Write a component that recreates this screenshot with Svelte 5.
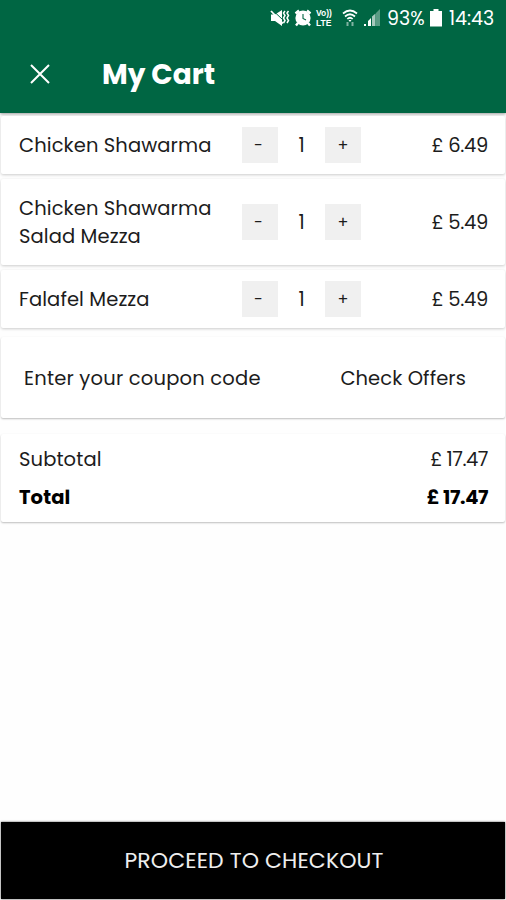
<script lang="ts">
	type Item = { name: string; qty: number; price: number };

	let items: Item[] = $state([
		{ name: 'Chicken Shawarma', qty: 1, price: 6.49 },
		{ name: 'Chicken Shawarma Salad Mezza', qty: 1, price: 5.49 },
		{ name: 'Falafel Mezza', qty: 1, price: 5.49 }
	]);

	let total = $derived(items.reduce((sum, item) => sum + item.qty * item.price, 0));

	const money = (value: number) => `£ ${value.toFixed(2)}`;

	const change = (item: Item, step: number) => () => {
		item.qty = Math.max(0, item.qty + step);
	};
</script>

<div class="screen">
	<header>
		<div class="status">
			<svg class="mute" width="20" height="18" viewBox="0 0 20 18">
				<path d="M1 5.500h4l7-4.500v16l-7-5H1z" fill="#fff" />
				<path d="M3.500 2l9 8.500" stroke="#006643" stroke-width="1" />
				<path d="M1 2l12 12.500" stroke="#fff" stroke-width="1.800" />
				<path d="M15 2l-1.500 2 1.500 2.500-1.500 2.500 1.500 2.500-1.500 2.500M18.500 2l-1.500 2 1.500 2.500-1.500 2.500 1.500 2.500-1.500 2.500" fill="none" stroke="#fff" stroke-width="1.500" />
			</svg>
			<svg class="alarm" width="18" height="18" viewBox="0 0 18 18">
				<path d="M1.500 4.500l3.500-3M16.500 4.500l-3.500-3M4 14l-2 2.500M14 14l2 2.500" stroke="#fff" stroke-width="2.400" />
				<circle cx="9" cy="9" r="7.600" fill="#fff" />
				<path d="M9 5v4.500l3 1.500" fill="none" stroke="#006643" stroke-width="1.100" />
			</svg>
			<span class="volte"><span>Vo))</span><span>LTE</span></span>
			<svg class="wifi" width="16" height="18" viewBox="0 0 16 18">
				<g fill="none" stroke="#fff" stroke-width="1.700">
					<path d="M1 4.500q7-6 14 0M3 7.500q5-4.500 10 0M5.300 10q2.700-2.500 5.400 0" />
				</g>
				<path d="M6.500 11h3L8 13z" fill="#fff" />
				<path d="M5.500 13v4M10.500 13v4" stroke="#fff" stroke-width="2" opacity=".5" />
			</svg>
			<svg class="signal" width="18" height="18" viewBox="0 0 18 18">
				<path d="M1 15h2v2H1zM5 12l3-3v8H5z" fill="#fff" />
				<path d="M9 7.500l3.500-3V17H9z" fill="#fff" opacity=".65" />
				<path d="M13 4l4-4v17h-4z" fill="#fff" opacity=".35" />
			</svg>
			<span class="percent">93%</span>
			<svg class="battery" width="12" height="18" viewBox="0 0 12 18">
				<path d="M3.500 0h5v2H12v15.500H0V2h3.500z" fill="#fff" />
			</svg>
			<span class="clock">14:43</span>
		</div>
		<div class="bar">
			<button class="close" aria-label="Close">
				<svg width="20" height="20" viewBox="0 0 20 20">
					<path d="M1 1l18 18M19 1L1 19" stroke="#fff" stroke-width="2" />
				</svg>
			</button>
			<h1>My Cart</h1>
		</div>
	</header>

	<main>
		<ul class="items">
			{#each items as item}
				<li class="card item">
					<span class="name">{item.name}</span>
					<div class="qty">
						<button class="minus" onclick={change(item, -1)}>-</button>
						<span>{item.qty}</span>
						<button onclick={change(item, 1)}>+</button>
					</div>
					<span class="price">{money(item.price)}</span>
				</li>
			{/each}
		</ul>

		<section class="card coupon">
			<span class="code">Enter your coupon code</span>
			<span class="offers">Check Offers</span>
		</section>

		<section class="card totals">
			<div class="line">
				<span class="label">Subtotal</span>
				<span class="sum">{money(total)}</span>
			</div>
			<div class="line grand">
				<span class="label">Total</span>
				<span class="sum">{money(total)}</span>
			</div>
		</section>
	</main>

	<button class="checkout">PROCEED TO CHECKOUT</button>
</div>

<style>
	:global(body) {
		background: #fff;
	}
	.screen {
		display: flex;
		flex-direction: column;
		box-sizing: border-box;
		height: 900px;
		padding-bottom: 1px;
		overflow: hidden;
		background: #fefefe;
		color: #1c1c1c;
		font-family: Poppins, Inter, sans-serif;
		font-size: 19.5px;
		line-height: 28px;
	}
	button {
		border: 0;
		padding: 0;
		font: inherit;
		color: inherit;
		cursor: pointer;
	}
	header {
		flex: none;
		height: 113px;
		background: #006643;
		color: #fff;
		box-shadow: 0 1px 3px rgba(0, 0, 0, 0.4);
	}
	.status {
		display: flex;
		justify-content: flex-end;
		align-items: center;
		height: 36px;
		padding-right: 11px;
		line-height: 20px;
		white-space: nowrap;
	}
	.status svg {
		flex: none;
	}
	.alarm {
		margin-left: 4px;
	}
	.volte {
		display: flex;
		flex-direction: column;
		width: 17px;
		margin-left: 4px;
		font: bold 8.5px/10px 'Liberation Sans', sans-serif;
	}
	.wifi {
		margin-left: 9px;
	}
	.signal {
		margin-left: 5px;
	}
	.percent {
		width: 38px;
		margin: 1px 0 0 6px;
		font-size: 19px;
	}
	.battery {
		margin-left: 5px;
	}
	.clock {
		width: 46px;
		margin: 1px 0 0 7px;
		font-size: 19px;
	}
	.bar {
		display: flex;
		align-items: center;
		height: 76px;
	}
	.close {
		display: flex;
		margin-left: 30px;
		background: none;
	}
	h1 {
		margin: 2px 0 0 52px;
		font-size: 28px;
		font-weight: 700;
		line-height: 36px;
	}
	main {
		flex: 1;
		padding: 3px 1px 0;
	}
	.card {
		box-sizing: border-box;
		background: #fff;
		border-radius: 2px;
		box-shadow: 0 1px 2px rgba(0, 0, 0, 0.26);
	}
	.items {
		display: flex;
		flex-direction: column;
		gap: 5px;
		margin: 0;
		padding: 0;
		list-style: none;
	}
	.item {
		display: flex;
		align-items: center;
		min-height: 58px;
		padding: 0 17px 0 18px;
		box-shadow: 0 1px 3px rgba(0, 0, 0, 0.2);
	}
	.item:nth-child(2) {
		min-height: 86px;
	}
	.name {
		width: 223px;
		padding-top: 2px;
		letter-spacing: 0.1px;
	}
	.qty {
		display: flex;
		align-items: center;
		width: 119px;
	}
	.qty button {
		width: 36px;
		height: 36px;
		padding-top: 1px;
		background: #f0f0f0;
		font-size: 16px;
	}
	.qty .minus {
		padding-right: 3px;
	}
	.qty span {
		flex: 1;
		padding-top: 1px;
		text-align: center;
	}
	.price {
		margin-left: auto;
		padding-top: 2px;
		letter-spacing: -0.3px;
	}
	.coupon {
		display: flex;
		justify-content: space-between;
		align-items: center;
		height: 81px;
		margin-top: 9px;
		padding: 2px 39px 0 23px;
	}
	.code {
		letter-spacing: 0.2px;
	}
	.offers {
		letter-spacing: 0.1px;
	}
	.totals {
		height: 88px;
		margin-top: 16px;
		padding: 12px 17px 0 18px;
	}
	.line {
		display: flex;
		justify-content: space-between;
		height: 38px;
	}
	.label {
		letter-spacing: 0.1px;
	}
	.sum {
		letter-spacing: -0.5px;
	}
	.grand {
		color: #000;
		font-weight: 700;
	}
	.grand .sum {
		letter-spacing: -0.4px;
	}
	.checkout {
		flex: none;
		height: 77px;
		margin: 0 1px;
		padding: 1px 0 0 2px;
		background: #000;
		color: #eee;
		font-size: 22px;
		letter-spacing: 0.1px;
		box-shadow: 0 0 2px rgba(0, 0, 0, 0.7);
	}
</style>
